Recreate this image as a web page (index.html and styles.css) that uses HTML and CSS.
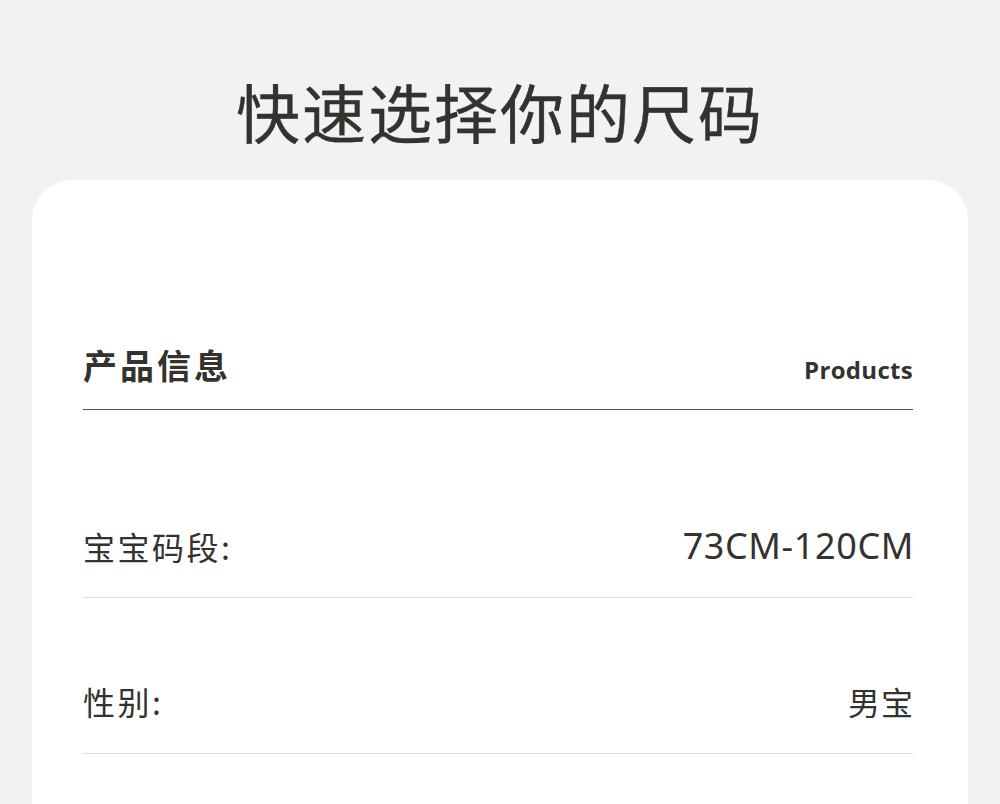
FILE: index.html
```html
<!DOCTYPE html>
<html lang="zh">
<head>
<meta charset="utf-8">
<link rel="stylesheet" href="styles.css">
</head>
<body>
<div class="page">
  <h1 class="title">快速选择你的尺码</h1>
  <div class="card">
    <div class="head">
      <span class="head-cn">产品信息</span>
      <span class="head-en">Products</span>
    </div>
    <div class="row first">
      <span class="label">宝宝码段:</span>
      <span class="value num">73CM-120CM</span>
    </div>
    <div class="row">
      <span class="label">性别:</span>
      <span class="value">男宝</span>
    </div>
  </div>
</div>
</body>
</html>
```
FILE: styles.css
```css
html, body {
  margin: 0;
  padding: 0;
  background: #f2f2f2;
  height: 804px;
  overflow: hidden;
}
.page {
  display: flex;
  flex-direction: column;
  align-items: center;
  font-family: "Noto Sans CJK SC", "Noto Sans", sans-serif;
  color: #33322e;
}
.title {
  margin: 78px 0 0;
  font-size: 64px;
  line-height: 64px;
  font-weight: 400;
  letter-spacing: 2px;
  color: #33322e;
  -webkit-text-stroke: 0.4px #33322e;
}
.card {
  margin-top: 38px;
  width: 936px;
  height: 700px;
  box-sizing: border-box;
  background: #fff;
  border-radius: 40px;
  padding: 160px 55px 0 51px;
}
.head {
  display: flex;
  justify-content: space-between;
  align-items: baseline;
  border-bottom: 1.5px solid #555;
  padding-bottom: 19px;
}
.head-cn {
  font-size: 34px;
  line-height: 50px;
  font-weight: 700;
  letter-spacing: 3px;
}
.head-en {
  font-family: "Open Sans", "Noto Sans", sans-serif;
  font-size: 24px;
  font-weight: 700;
  letter-spacing: 0.3px;
}
.row {
  display: flex;
  justify-content: space-between;
  align-items: center;
  padding: 78px 0 27px;
  border-bottom: 1.5px solid #dddddd;
}
.row.first {
  padding: 111px 0 26px;
}
.label, .value {
  font-size: 32px;
  line-height: 50px;
  letter-spacing: 2.5px;
}
.value {
  letter-spacing: 1px;
  margin-right: -1px;
}
.num {
  font-family: "Noto Sans", "Open Sans", sans-serif;
  font-size: 36px;
  letter-spacing: 0.6px;
  margin-right: -1px;
}
```
